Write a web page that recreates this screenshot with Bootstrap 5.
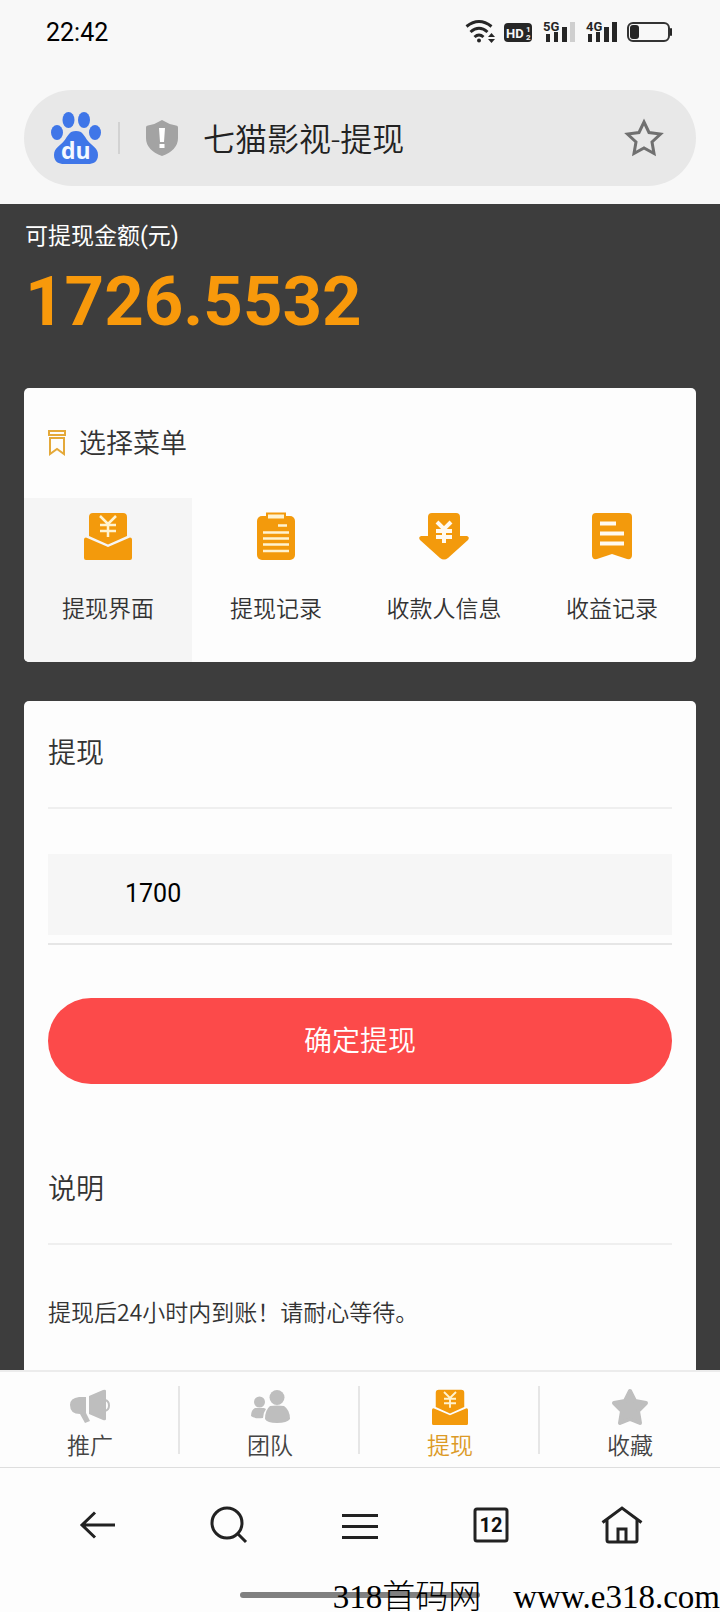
<!DOCTYPE html>
<html lang="zh-CN">
<head>
<meta charset="utf-8">
<meta name="viewport" content="width=device-width, initial-scale=1">
<title>七猫影视-提现</title>
<link href="https://cdn.jsdelivr.net/npm/bootstrap@5.3.0/dist/css/bootstrap.min.css" rel="stylesheet">
<style>
  :root { --brand: #f39a0c; --ink: #333; --rule: #efefef; --paper: #fdfdfd; }
  body { font-family: Roboto, "Noto Sans CJK SC", sans-serif; font-weight: 350; color: var(--ink); background: #3d3d3d; }
  svg { display: block; flex: none; overflow: visible; }
  .top-area { background: #f8f8f8; }
  .status-bar { height: 66px; padding: 0 47px 0 46px; }
  .clock { font-size: 25px; font-weight: 400; color: #000; }
  .status-bar svg text { font-family: Roboto, sans-serif; font-weight: 700; }
  .address { height: 96px; margin: 24px 24px 18px; padding: 0 31px 0 26px; background: #e8e8e8; }
  .address-title { font-size: 32px; color: #222; margin-left: 24px; padding-top: 4px; }
  .address-rule { width: 2px; height: 32px; background: #d2d2d2; margin: 0 25px 0 16px; }
  .plain-btn { border: 0; background: none; padding: 0; color: #222; }
  .fund { padding: 17px 25px 46px; color: #fff; }
  .fund-label { font-size: 23px; line-height: 32px; font-weight: 400; }
  .fund-value { font-size: 69px; line-height: 80px; font-weight: 700; color: #f8990b; margin-top: 9px; }
  .panel { margin: 0 24px; border-radius: 5px; background: var(--paper); overflow: hidden; }
  .menu-title { height: 110px; padding-left: 24px; gap: 13px; font-size: 27px; }
  .menu-title span { padding-top: 2px; }
  .menu-cell { padding: 14px 0 36px; font-size: 23px; line-height: 32px; color: var(--ink); }
  .menu-cell span { margin-top: 34px; }
  .menu-cell.active { background: #f5f5f5; }
  .withdraw { margin-top: 39px; padding: 0 24px; border-radius: 5px 5px 0 0; }
  .section-title { height: 108px; font-size: 28px; font-weight: inherit; border-bottom: 2px solid var(--rule); }
  .amount-row { margin-top: 45px; padding-bottom: 8px; border-bottom: 2px solid #e6e6e6; }
  .amount-row input { height: 81px; padding: 0 77px 2px; border: 0; border-radius: 0; background: #f6f6f6; font-size: 25px; font-weight: 400; color: #000; }
  .submit { margin: 53px 0; height: 86px; padding: 8px 0 6px; font-size: 28px; font-weight: inherit; color: #fff; background: #fc4a4a; border: 0; }
  .submit:hover { background: #e94141; color: #fff; }
  .note { margin: 50px 0 0; font-family: "Noto Sans CJK SC", sans-serif; font-size: 23px; line-height: 32px; }
  .tabs { background: var(--paper); border-top: 2px solid #ececec; border-bottom: 1px solid #dedede; padding: 14px 0 6px; }
  .tab { font-size: 23px; line-height: 28px; color: #444; padding-top: 3px; gap: 8px; }
  .tab:not(:last-child) { background: linear-gradient(#e6e6e6, #e6e6e6) right top / 2px 68px no-repeat; }
  .tab.active { color: #dc9a26; }
  .tab svg { color: #bebebe; }
  .tab.active svg { color: var(--brand); }
  .browser { background: var(--paper); }
  .browser-nav { height: 114px; padding: 0 33px; }
  .tab-count { font-family: Roboto, sans-serif; font-weight: 700; font-size: 20px; fill: #111; }
  .home-bar { width: 240px; height: 6px; border-radius: 3px; background: #808080; margin: 10px auto 14px; }
  .watermark { right: 0; bottom: 0; gap: 32px; font: 300 33px/30px "Liberation Serif", "Noto Sans CJK SC", serif; color: #000; }
</style>
</head>
<body class="vh-100 d-flex flex-column overflow-hidden">
<svg width="0" height="0" class="position-absolute" aria-hidden="true">
  <symbol id="i-envelope" viewBox="0 0 48 48">
    <path fill="currentColor" d="M9 1h30q4 0 4 4v19L24 32.500 5 24V5q0-4 4-4zM2 25.500 24 35l22-9.500q2 0 2 2V46q0 2-2 2H2q-2 0-2-2V27.500q0-2 2-2z"/>
    <path fill="none" stroke="#fff3d0" stroke-width="2.500" d="m16 4 8 8 8-8M16 13h16M16 19h16M24 12v13"/>
  </symbol>
</svg>

<header class="top-area">
  <div class="status-bar d-flex align-items-center justify-content-between">
    <span class="clock">22:42</span>
    <svg width="208" height="26" viewBox="466 20 208 26" fill="#262626" role="img" aria-label="信号与电量">
      <g fill="none" stroke="#262626" stroke-width="3"><path d="M467.500 26.500q12.500-10 25 0M471.500 32q8.500-7.500 17 0M475.500 37q4.500-4 9 0"/></g>
      <circle cx="480" cy="40.500" r="2"/>
      <path d="m489 37 3.500-4 3.500 4zM489 39h7l-3.500 4z"/>
      <rect x="505" y="23" width="28" height="19" rx="4"/>
      <text x="507" y="38" font-size="13" fill="#f8f8f8">HD</text>
      <text x="527" y="32" font-size="8" fill="#f8f8f8">1</text><text x="527" y="40" font-size="8" fill="#f8f8f8">2</text>
      <text x="544" y="31" font-size="13">5G</text>
      <path d="M547 34h4v8h-4zM555 32h4v10h-4zM563 27h5v15h-5z"/><path fill="#cfcfcf" d="M571 22h5v20h-5z"/>
      <text x="587" y="31" font-size="13">4G</text>
      <path d="M589 34h4v8h-4zM597 32h4v10h-4zM605 27h5v15h-5zM613 22h5v20h-5z"/>
      <rect x="629" y="23" width="41" height="18" rx="5" fill="none" stroke="#333" stroke-width="2"/>
      <rect x="631" y="25" width="9" height="14" rx="3"/><rect x="671" y="28" width="2" height="8" rx="1"/>
    </svg>
  </div>
  <div class="address rounded-pill d-flex align-items-center">
    <svg width="52" height="54" viewBox="0 0 52 54" fill="#3f76e8" role="img" aria-label="百度">
      <ellipse cx="18.500" cy="9" rx="6" ry="8"/><ellipse cx="34" cy="9" rx="6" ry="8"/>
      <ellipse cx="7" cy="21.500" rx="6" ry="7.500"/><ellipse cx="45" cy="21.500" rx="6" ry="7.500"/>
      <path d="M26 20c-7 0-8 5-12 10s-10 7-10 14 5 9 10 9h24c5 0 10-2 10-9s-6-9-10-14-5-10-12-10z"/>
      <text x="11" y="48" font-family="Open Sans, sans-serif" font-weight="700" font-size="23" fill="#f4f8ff">du</text>
    </svg>
    <div class="address-rule"></div>
    <svg width="34" height="38" viewBox="0 0 34 38"><path fill="#a3a3a3" d="M17 1q7 4.500 14 5.500 2 0 2 2V19q0 12-16 18Q1 31 1 19V8.500q0-2 2-2Q10 5.500 17 1z"/><path fill="#fff" d="M14 9h6l-1 14h-4zM14.500 25h5v4h-5z"/></svg>
    <span class="address-title flex-grow-1">七猫影视-提现</span>
    <button type="button" class="plain-btn" aria-label="收藏网页"><svg width="42" height="42" viewBox="0 0 42 42"><path fill="none" stroke="#707070" stroke-width="3" d="m21 5 5 10.500 11.500 1.500-8.500 8 2 11.500L21 31l-10 5.500L13 25l-8.500-8L16 15.500z"/></svg></button>
  </div>
</header>

<main class="flex-grow-1 d-flex flex-column overflow-hidden">
  <section class="fund">
    <div class="fund-label">可提现金额(元)</div>
    <div class="fund-value">1726.5532</div>
  </section>

  <section class="panel flex-shrink-0">
    <div class="menu-title d-flex align-items-center">
      <svg width="18" height="26" viewBox="0 0 18 26" fill="none" stroke="#e4a93a" stroke-width="2"><path d="M1 1h16v4H1zM2 8v16l7-5 7 5V8zM1 8h16"/></svg>
      <span>选择菜单</span>
    </div>
    <nav class="row row-cols-4 g-0">
      <a href="#" class="menu-cell active d-flex flex-column align-items-center text-decoration-none"><svg width="48" height="48" color="#f39a0c"><use href="#i-envelope"/></svg><span>提现界面</span></a>
      <a href="#" class="menu-cell d-flex flex-column align-items-center text-decoration-none">
        <svg width="48" height="48" viewBox="0 0 48 48"><rect x="5" y="4" width="38" height="44" rx="5" fill="#f39a0c"/><rect x="15" y="1.500" width="18" height="6" fill="#fff3d0" stroke="#f39a0c" stroke-width="2"/><path stroke="#fff3d0" stroke-width="2.500" d="M26 13.500h9M11 20.500h26M11 26.500h26M11 32.500h26M11 39h26"/></svg>
        <span>提现记录</span></a>
      <a href="#" class="menu-cell d-flex flex-column align-items-center text-decoration-none">
        <svg width="50" height="48" viewBox="0 0 50 48"><path fill="#f39a0c" d="M13 1h24q4 0 4 4v19h7q3 1 1 4L29 46q-4 3-8 0L1 28q-2-3 1-4h7V5q0-4 4-4z"/><path fill="none" stroke="#fffaf0" stroke-width="4" d="m18 10 7 7 7-7M17 19h16M17 25h16M25 17v14"/></svg>
        <span>收款人信息</span></a>
      <a href="#" class="menu-cell d-flex flex-column align-items-center text-decoration-none">
        <svg width="48" height="48" viewBox="0 0 48 48"><path fill="#f39a0c" d="M8 1h32q4 0 4 4v38q0 5-5 4l-15-5-15 5q-5 1-5-4V5q0-4 4-4z"/><path stroke="#fffaf0" stroke-width="4" d="M12 11.500h16M12 21.500h24M12 31.500h24"/></svg>
        <span>收益记录</span></a>
    </nav>
  </section>

  <section class="panel withdraw flex-grow-1">
    <form onsubmit="return false">
      <label for="amount" class="section-title d-flex align-items-center">提现</label>
      <div class="amount-row"><input id="amount" class="form-control shadow-none" type="text" inputmode="decimal" value="1700"></div>
      <button type="submit" class="submit btn rounded-pill w-100">确定提现</button>
    </form>
    <h2 class="section-title d-flex align-items-center m-0">说明</h2>
    <p class="note">提现后24小时内到账！请耐心等待。</p>
  </section>
</main>

<nav class="tabs d-flex">
  <a href="#" class="tab col d-flex flex-column align-items-center text-decoration-none">
    <svg width="40" height="36" viewBox="0 0 40 36" fill="currentColor"><path d="M9 8h7v16l4 8-5 2-5-9q-10 0-10-9 0-7 9-8zM19 7l14-6q3-1 3 1v28q0 2-3 1l-14-6z"/><path fill="none" stroke="currentColor" stroke-width="2" d="M35 11q4 1 4 5.500T35 22"/></svg>推广</a>
  <a href="#" class="tab col d-flex flex-column align-items-center text-decoration-none">
    <svg width="40" height="36" viewBox="0 0 40 36" fill="currentColor"><circle cx="27" cy="8.500" r="7.500"/><path d="M20 17q7-1 14 0 6 4 6 13-3 4-13 4t-12-4q0-9 5-13z"/><circle cx="9.500" cy="13" r="5.500"/><path d="M5 19h9l2 1q-3 4-3 9-9 1-12-2 0-6 4-8z"/></svg>团队</a>
  <a href="#" class="tab active col d-flex flex-column align-items-center text-decoration-none" aria-current="page">
    <svg width="36" height="36"><use href="#i-envelope"/></svg>提现</a>
  <a href="#" class="tab col d-flex flex-column align-items-center text-decoration-none">
    <svg width="40" height="36" viewBox="0 0 40 36" fill="currentColor" stroke="currentColor" stroke-width="4" stroke-linejoin="round"><path d="m20 2 5 10 11 2-8 8 2 12-10-4-10 4 2-12-8-8 11-2z"/></svg>收藏</a>
</nav>

<footer class="browser position-relative">
  <nav class="browser-nav d-flex align-items-center">
    <button type="button" class="plain-btn col d-flex justify-content-center" aria-label="返回"><svg width="36" height="40" viewBox="0 0 36 40" fill="none" stroke="#222" stroke-width="3"><path d="M35 20H2M15 7.500 2 20l13 12.500"/></svg></button>
    <button type="button" class="plain-btn col d-flex justify-content-center" aria-label="搜索"><svg width="38" height="40" viewBox="0 0 38 40" fill="none" stroke="#222" stroke-width="3"><circle cx="17" cy="18" r="15"/><path d="m27 28 9 9"/></svg></button>
    <button type="button" class="plain-btn col d-flex justify-content-center" aria-label="菜单"><svg width="36" height="40" viewBox="0 0 36 40" stroke="#222" stroke-width="3"><path d="M0 10.500h36M0 21.500h36M0 32.500h36"/></svg></button>
    <button type="button" class="plain-btn col d-flex justify-content-center" aria-label="标签页"><svg width="36" height="40" viewBox="0 0 36 40"><rect x="2" y="4" width="32" height="32" rx="2" fill="none" stroke="#222" stroke-width="3"/><text class="tab-count" x="18" y="27" text-anchor="middle">12</text></svg></button>
    <button type="button" class="plain-btn col d-flex justify-content-center" aria-label="主页"><svg width="42" height="40" viewBox="0 0 42 40" fill="none" stroke="#222" stroke-width="3"><path d="M1.500 17.500 21 3l19.500 14.500M6 15v20q0 2 2 2h26q2 0 2-2V15M17 37V24h8v13"/></svg></button>
  </nav>
  <div class="d-flex"><div class="home-bar"></div></div>
  <div class="watermark position-absolute d-flex text-nowrap"><span>318首码网</span><span>www.e318.com</span></div>
</footer>
<script src="https://cdn.jsdelivr.net/npm/bootstrap@5.3.0/dist/js/bootstrap.bundle.min.js"></script>
</body>
</html>
